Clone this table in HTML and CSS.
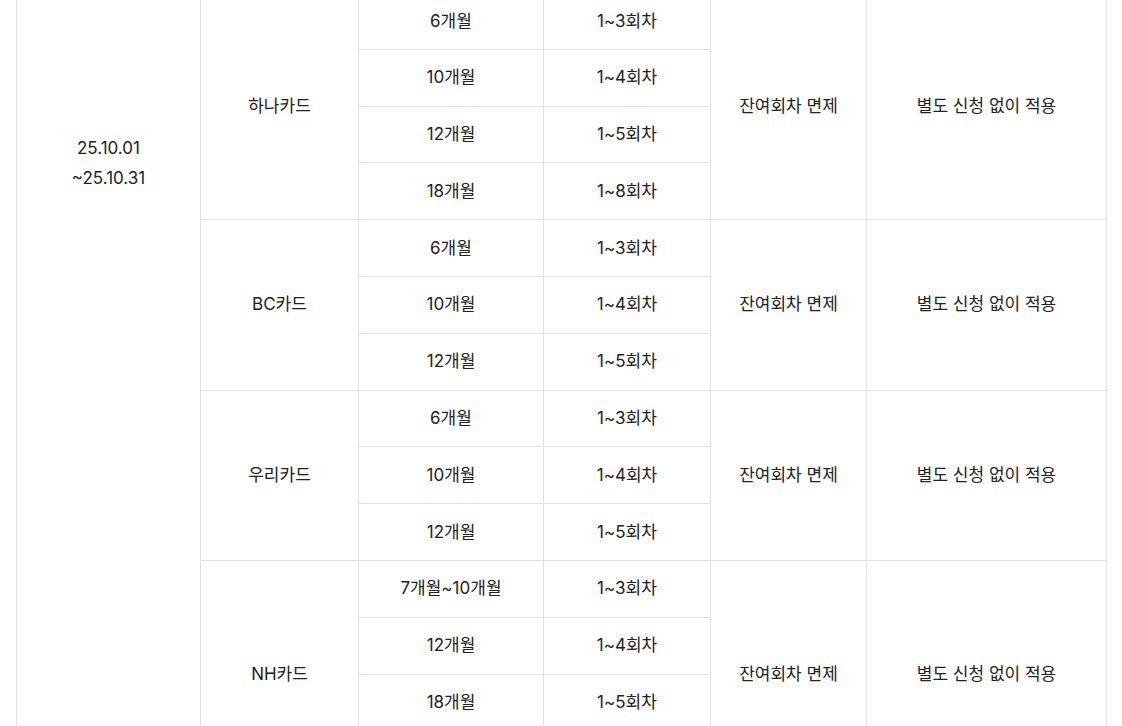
FILE: index.html
```html
<!DOCTYPE html>
<html lang="ko">
<head>
<meta charset="utf-8">
<title>무이자 할부 안내</title>
<link rel="stylesheet" href="styles.css">
</head>
<body>
<div class="wrap">
  <table class="inst">
    <colgroup>
      <col class="c-date"><col class="c-card"><col class="c-month"><col class="c-pay"><col class="c-benefit"><col class="c-apply">
    </colgroup>
    <tbody>
      <tr>
        <td rowspan="14" class="date"><span class="date-text">25.10.01<br>~25.10.31</span></td>
        <td rowspan="4">하나카드</td>
        <td>6개월</td><td>1~3회차</td>
        <td rowspan="4">잔여회차 면제</td>
        <td rowspan="4">별도 신청 없이 적용</td>
      </tr>
      <tr><td>10개월</td><td>1~4회차</td></tr>
      <tr><td>12개월</td><td>1~5회차</td></tr>
      <tr><td>18개월</td><td>1~8회차</td></tr>
      <tr>
        <td rowspan="3">BC카드</td>
        <td>6개월</td><td>1~3회차</td>
        <td rowspan="3">잔여회차 면제</td>
        <td rowspan="3">별도 신청 없이 적용</td>
      </tr>
      <tr><td>10개월</td><td>1~4회차</td></tr>
      <tr><td>12개월</td><td>1~5회차</td></tr>
      <tr>
        <td rowspan="3">우리카드</td>
        <td>6개월</td><td>1~3회차</td>
        <td rowspan="3">잔여회차 면제</td>
        <td rowspan="3">별도 신청 없이 적용</td>
      </tr>
      <tr><td>10개월</td><td>1~4회차</td></tr>
      <tr><td>12개월</td><td>1~5회차</td></tr>
      <tr>
        <td rowspan="4">NH카드</td>
        <td>7개월~10개월</td><td>1~3회차</td>
        <td rowspan="4">잔여회차 면제</td>
        <td rowspan="4">별도 신청 없이 적용</td>
      </tr>
      <tr><td>12개월</td><td>1~4회차</td></tr>
      <tr><td>18개월</td><td>1~5회차</td></tr>
      <tr><td>24개월</td><td>1~6회차</td></tr>
    </tbody>
  </table>
</div>
</body>
</html>
```

FILE: styles.css
```css
html, body {
  margin: 0;
  padding: 0;
  background: #ffffff;
}
body {
  font-family: "Inter", "Noto Sans CJK KR", sans-serif;
  color: #222222;
  height: 726px;
  overflow: hidden;
}
.wrap {
  width: 1090px;
  margin: 0 auto;
}
.inst {
  width: 1090px;
  border-collapse: collapse;
  table-layout: fixed;
  margin-top: -8px;
  font-size: 17px;
  line-height: 28.8px;
}
.c-date { width: 184px; }
.c-card { width: 158px; }
.c-month { width: 185px; }
.c-pay { width: 167px; }
.c-benefit { width: 156px; }
.c-apply { width: 240px; }
.inst td {
  border: 1px solid #e0e2e7;
  padding: 13.5px 8px;
  text-align: center;
  vertical-align: middle;
  white-space: nowrap;
}
.inst td.date {
  vertical-align: top;
  padding-top: 140px;
  line-height: 30px;
}
.date-text {
  display: inline-block;
}
```
